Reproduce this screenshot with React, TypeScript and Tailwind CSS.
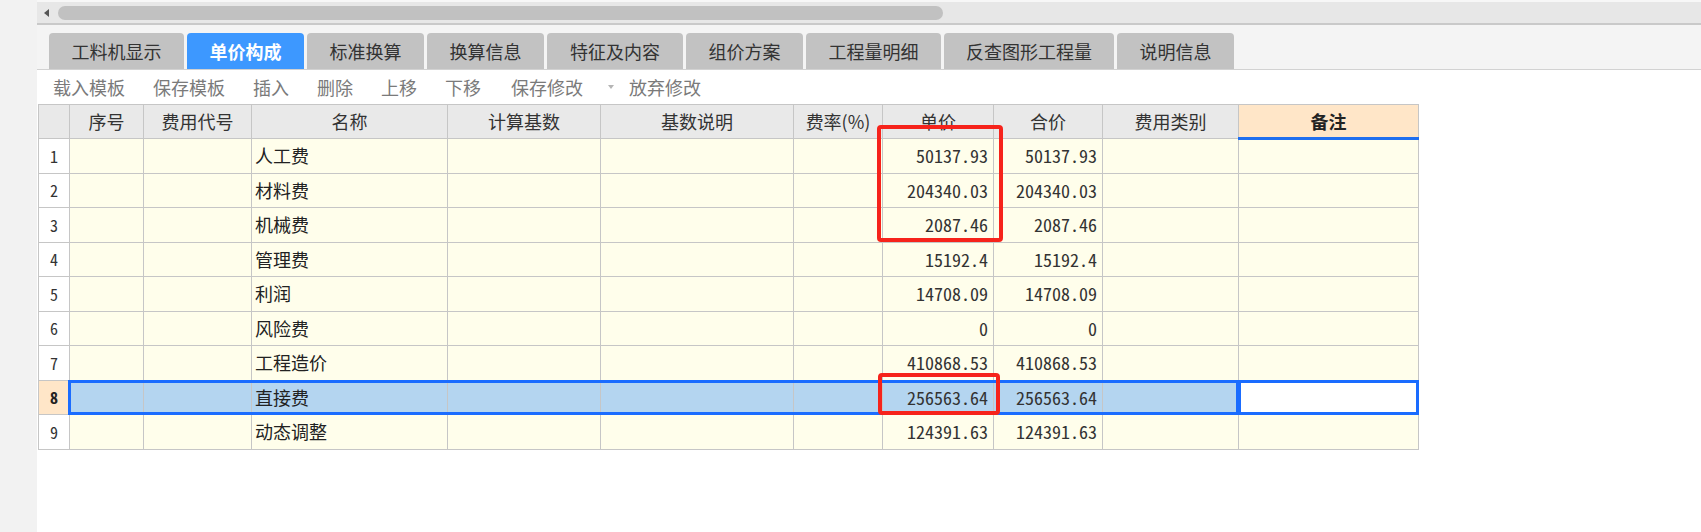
import React from "react";

interface FeeRow {
  no: number;
  name: string;
  price: string;
}

const rows: FeeRow[] = [
  { no: 1, name: "人工费", price: "50137.93" },
  { no: 2, name: "材料费", price: "204340.03" },
  { no: 3, name: "机械费", price: "2087.46" },
  { no: 4, name: "管理费", price: "15192.4" },
  { no: 5, name: "利润", price: "14708.09" },
  { no: 6, name: "风险费", price: "0" },
  { no: 7, name: "工程造价", price: "410868.53" },
  { no: 8, name: "直接费", price: "256563.64" },
  { no: 9, name: "动态调整", price: "124391.63" },
];

const tabs = [
  { label: "工料机显示", w: "w-[135px]" },
  { label: "单价构成", w: "w-[117px]", active: true },
  { label: "标准换算", w: "w-[117px]" },
  { label: "换算信息", w: "w-[117px]" },
  { label: "特征及内容", w: "w-[136px]" },
  { label: "组价方案", w: "w-[117px]" },
  { label: "工程量明细", w: "w-[135px]" },
  { label: "反查图形工程量", w: "w-[170px]" },
  { label: "说明信息", w: "w-[117px]" },
];

const cols = [
  { label: "", w: "w-[31px]" },
  { label: "序号", w: "w-[74px]" },
  { label: "费用代号", w: "w-[108px]" },
  { label: "名称", w: "w-[196px]" },
  { label: "计算基数", w: "w-[153px]" },
  { label: "基数说明", w: "w-[193px]" },
  { label: "费率(%)", w: "w-[89px]" },
  { label: "单价", w: "w-[111px]" },
  { label: "合价", w: "w-[109px]" },
  { label: "费用类别", w: "w-[136px]" },
  { label: "备注", w: "w-[180px]" },
];

const cjk = "font-['Noto_Sans_CJK_SC','Noto_Sans',sans-serif]";
const mono = "font-['Noto_Sans_Mono_CJK_SC','Liberation_Mono',monospace]";

export default function App() {
  const selected = 8;

  return (
    <div className={`flex h-[532px] w-[1701px] overflow-hidden bg-white ${cjk}`}>
      {/* left strip */}
      <div className="w-[37px] shrink-0 bg-[#f2f2f2]" />

      <div className="flex min-w-0 flex-1 flex-col">
        {/* horizontal scrollbar */}
        <div className="flex h-[23px] shrink-0 items-center border-t-2 border-[#f7f7f7] bg-[#e7e7e7]">
          <svg width="14" height="14" viewBox="0 0 14 14" className="ml-[3px] shrink-0">
            <path d="M9 3 L4 7 L9 11 Z" fill="#555" />
          </svg>
          <div className="ml-[4px] h-[14px] w-[885px] rounded-full bg-[#c1c1c1]" />
        </div>
        <div className="h-[2px] shrink-0 bg-[#c9c9c9]" />

        {/* tabs */}
        <div className="flex h-[45px] shrink-0 items-end gap-[3px] border-b border-[#d2d2d2] bg-[#f4f4f4] pl-[12px]">
          {tabs.map((t) => (
            <div
              key={t.label}
              className={`${t.w} flex h-[36px] items-center justify-center rounded-t-[4px] text-[18px] ${
                t.active ? "bg-[#3d98ff] font-bold text-white" : "bg-[#c2c2c2] text-[#333]"
              }`}
            >
              {t.label}
            </div>
          ))}
        </div>

        {/* toolbar */}
        <div className="flex h-[34px] shrink-0 items-center pl-[16px] text-[18px] text-[#7a7a7a]">
          <div className="flex items-center gap-[28px]">
            <span>载入模板</span>
            <span>保存模板</span>
            <span>插入</span>
            <span>删除</span>
            <span>上移</span>
            <span>下移</span>
          </div>
          <span className="ml-[30px]">保存修改</span>
          <svg width="8" height="6" viewBox="0 0 8 6" className="ml-[24px]">
            <path d="M1 1 L7 1 L4 5 Z" fill="#b5b5b5" />
          </svg>
          <span className="ml-[14px]">放弃修改</span>
        </div>

        {/* grid */}
        <div className="relative ml-[1px] w-[1381px]">
          <table className="w-[1381px] table-fixed border-collapse text-[18px] text-[#222]">
            <colgroup>
              {cols.map((c, i) => (
                <col key={i} className={c.w} />
              ))}
            </colgroup>
            <thead>
              <tr className="h-[34px]">
                {cols.map((c, i) => (
                  <th
                    key={i}
                    className={
                      c.label === "备注"
                        ? "border border-[#c6c6c6] border-b-[3px] border-b-[#1f6ff0] bg-[#ffe6c8] font-bold text-[#222]"
                        : "border border-[#c6c6c6] bg-[#e9e9e9] font-normal text-[#333]"
                    }
                  >
                    {c.label}
                  </th>
                ))}
              </tr>
            </thead>
            <tbody>
              {rows.map((r) => {
                const sel = r.no === selected;
                const cell = `border border-[#c6c6c6] ${sel ? "bg-[#b4d5f0]" : "bg-[#fffeeb]"}`;
                return (
                  <tr key={r.no} className="h-[34.5px]">
                    <td
                      className={`border border-[#c6c6c6] text-center text-[16px] ${mono} ${
                        sel ? "bg-[#ffe6c8] font-bold" : "bg-white text-[#333]"
                      }`}
                    >
                      {r.no}
                    </td>
                    <td className={cell} />
                    <td className={cell} />
                    <td className={`${cell} pl-[3px]`}>{r.name}</td>
                    <td className={cell} />
                    <td className={cell} />
                    <td className={cell} />
                    <td className={`${cell} pr-[5px] text-right text-[#333] ${mono}`}>{r.price}</td>
                    <td className={`${cell} pr-[5px] text-right text-[#333] ${mono}`}>{r.price}</td>
                    <td className={cell} />
                    <td className="border border-[#c6c6c6] bg-[#fffeeb]" />
                  </tr>
                );
              })}
            </tbody>
          </table>

          {/* selected row outline */}
          <div className="pointer-events-none absolute left-[30px] top-[276px] h-[35px] w-[1171px] border-[3px] border-[#1a6cff]" />
          {/* active cell outline */}
          <div className="pointer-events-none absolute left-[1200px] top-[276px] h-[35px] w-[181px] border-[3px] border-[#1a6cff] bg-white" />

          {/* red annotation boxes */}
          <div className="pointer-events-none absolute left-[839px] top-[21px] h-[117px] w-[126px] rounded-[4px] border-[4px] border-[#f6231b]" />
          <div className="pointer-events-none absolute left-[840px] top-[269px] h-[42px] w-[122px] rounded-[4px] border-[4px] border-[#f6231b]" />
        </div>
      </div>
    </div>
  );
}
